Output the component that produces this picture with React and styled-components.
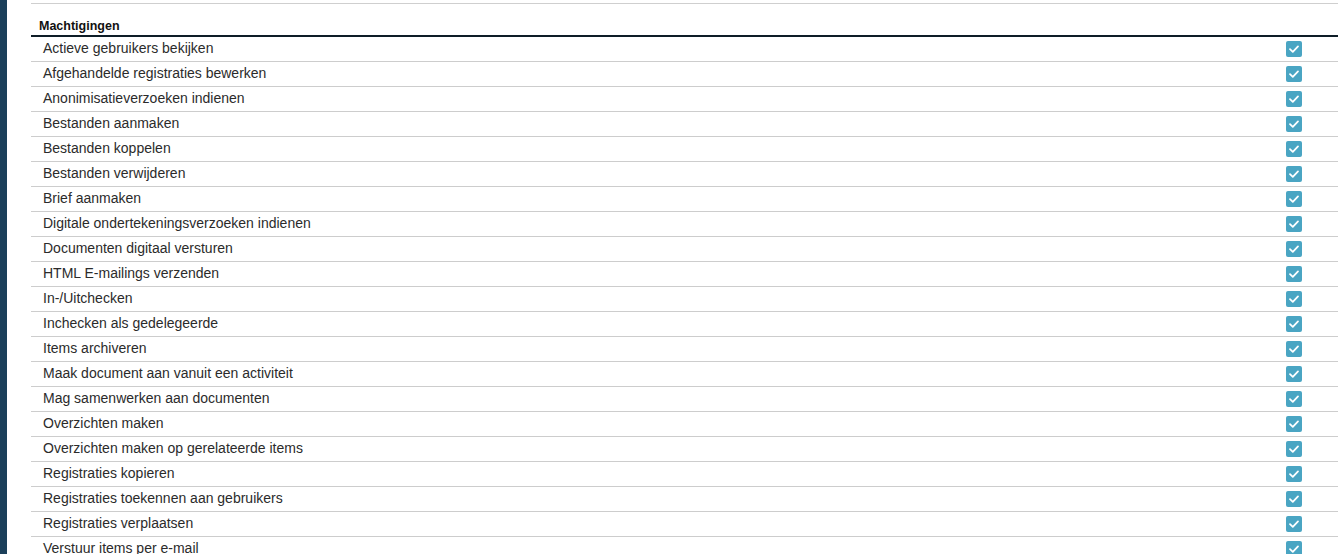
import styled, { createGlobalStyle } from 'styled-components'

const GlobalStyle = createGlobalStyle`
  html, body {
    margin: 0;
    padding: 0;
    background: #fff;
    overflow: hidden;
  }
  body {
    font-family: 'Liberation Sans', Arial, sans-serif;
  }
`

const Page = styled.div`
  display: flex;
  height: 554px;
  overflow: hidden;
`

const Sidebar = styled.div`
  width: 7px;
  flex-shrink: 0;
  background-color: #1b3f5a;
`

const Content = styled.div`
  flex: 1;
  padding: 3px 0 0 24px;
`

const TopRule = styled.div`
  border-top: 1px solid #cfcfcf;
`

const Heading = styled.div`
  padding: 14px 0 0 8px;
  height: 17px;
  font-size: 12.5px;
  font-weight: bold;
  color: #111;
  line-height: 16px;
`

const Table = styled.div`
  border-top: 2px solid #0e1d27;
`

const Row = styled.div`
  display: grid;
  grid-template-columns: 1fr 88px;
  align-items: start;
  height: 24px;
  border-bottom: 1px solid #cdcdcd;
`

const Label = styled.div`
  padding-left: 12px;
  font-size: 14px;
  color: #2b2b2b;
  line-height: 22px;
  white-space: nowrap;
`

const CheckCell = styled.div`
  display: flex;
  justify-content: center;
  padding-top: 4px;
`

const Box = styled.div`
  width: 16px;
  height: 16px;
  border-radius: 2px;
  background-color: #4aa5c3;
  display: flex;
  align-items: center;
  justify-content: center;
`

const PERMISSIONS = [
  'Actieve gebruikers bekijken',
  'Afgehandelde registraties bewerken',
  'Anonimisatieverzoeken indienen',
  'Bestanden aanmaken',
  'Bestanden koppelen',
  'Bestanden verwijderen',
  'Brief aanmaken',
  'Digitale ondertekeningsverzoeken indienen',
  'Documenten digitaal versturen',
  'HTML E-mailings verzenden',
  'In-/Uitchecken',
  'Inchecken als gedelegeerde',
  'Items archiveren',
  'Maak document aan vanuit een activiteit',
  'Mag samenwerken aan documenten',
  'Overzichten maken',
  'Overzichten maken op gerelateerde items',
  'Registraties kopieren',
  'Registraties toekennen aan gebruikers',
  'Registraties verplaatsen',
  'Verstuur items per e-mail',
]

const Checkbox = () => (
  <Box>
    <svg width="16" height="16" viewBox="0 0 16 16">
      <path
        d="M4 8.2 L6.8 10.8 L12 5.4"
        fill="none"
        stroke="#fff"
        strokeWidth="1.8"
        strokeLinecap="round"
        strokeLinejoin="round"
      />
    </svg>
  </Box>
)

const App = () => {
  return (
    <Page>
      <GlobalStyle />
      <Sidebar />
      <Content>
        <TopRule />
        <Heading>Machtigingen</Heading>
        <Table>
          {PERMISSIONS.map((label) => (
            <Row key={label}>
              <Label>{label}</Label>
              <CheckCell>
                <Checkbox />
              </CheckCell>
            </Row>
          ))}
        </Table>
      </Content>
    </Page>
  )
}

export default App
